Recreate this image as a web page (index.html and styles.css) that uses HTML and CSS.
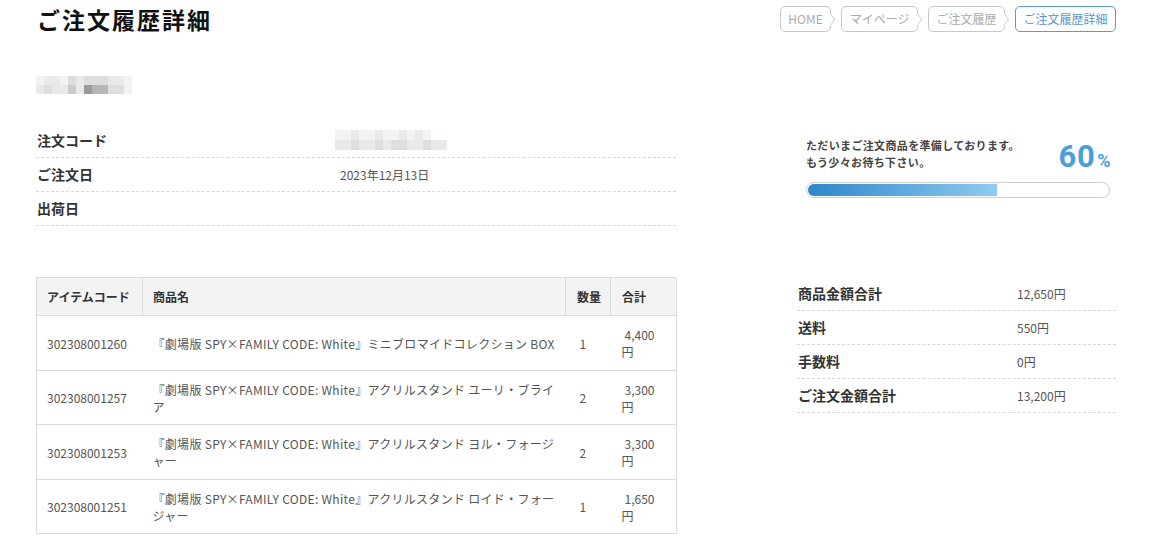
FILE: index.html
```html
<!DOCTYPE html>
<html lang="ja">
<head>
<meta charset="utf-8">
<title>ご注文履歴詳細</title>
<link rel="stylesheet" href="styles.css">
</head>
<body>
<div class="page">
  <header class="head">
    <h1 class="title">ご注文履歴詳細</h1>
    <nav class="crumbs">
      <a class="crumb">HOME</a>
      <a class="crumb">マイページ</a>
      <a class="crumb">ご注文履歴</a>
      <span class="crumb current">ご注文履歴詳細</span>
    </nav>
  </header>

  <div class="customer">
    <div class="mosaic">
      <span class="c1"></span><span class="c2"></span><span class="c2"></span><span class="c1"></span><span class="c3"></span><span class="c2"></span><span class="c3"></span><span class="c3"></span><span class="c3"></span><span class="c2"></span><span class="c2"></span><span class="c1"></span>
      <span class="c2"></span><span class="c3"></span><span class="c2"></span><span class="c2"></span><span class="c4"></span><span class="c2"></span><span class="c6"></span><span class="c5"></span><span class="c5"></span><span class="c3"></span><span class="c3"></span><span class="c1"></span>
    </div>
  </div>

  <section class="row row-top">
    <div class="info">
      <div class="info-row">
        <div class="info-label">注文コード</div>
        <div class="info-value">
          <div class="mosaic mosaic-code">
            <span class="c1"></span><span class="c1"></span><span class="c2"></span><span class="c1"></span><span class="c1"></span><span class="c2"></span><span class="c1"></span><span class="c1"></span><span class="c2"></span><span class="c1"></span><span class="c2"></span><span class="c1"></span><span class="c0"></span><span class="c0"></span>
            <span class="c2"></span><span class="c2"></span><span class="c3"></span><span class="c2"></span><span class="c2"></span><span class="c3"></span><span class="c2"></span><span class="c3"></span><span class="c3"></span><span class="c2"></span><span class="c2"></span><span class="c3"></span><span class="c2"></span><span class="c2"></span>
          </div>
        </div>
      </div>
      <div class="info-row">
        <div class="info-label">ご注文日</div>
        <div class="info-value">2023年12月13日</div>
      </div>
      <div class="info-row">
        <div class="info-label">出荷日</div>
        <div class="info-value"></div>
      </div>
    </div>

    <div class="status">
      <div class="status-head">
        <p class="status-text">ただいまご注文商品を準備しております。<br>もう少々お待ち下さい。</p>
        <div class="status-pct">60<span class="pct-sign">%</span></div>
      </div>
      <div class="bar"><div class="bar-fill" style="width: 63%"></div></div>
    </div>
  </section>

  <section class="row row-bottom">
    <table class="items">
      <colgroup>
        <col class="col-code"><col class="col-name"><col class="col-qty"><col class="col-sum">
      </colgroup>
      <thead>
        <tr><th>アイテムコード</th><th>商品名</th><th>数量</th><th>合計</th></tr>
      </thead>
      <tbody>
        <tr>
          <td>302308001260</td>
          <td class="name">『劇場版 SPY×FAMILY CODE: White』ミニブロマイドコレクション BOX</td>
          <td>1</td>
          <td class="sum"><span class="num">4,400</span><br>円</td>
        </tr>
        <tr>
          <td>302308001257</td>
          <td class="name">『劇場版 SPY×FAMILY CODE: White』アクリルスタンド ユーリ・ブライア</td>
          <td>2</td>
          <td class="sum"><span class="num">3,300</span><br>円</td>
        </tr>
        <tr>
          <td>302308001253</td>
          <td class="name">『劇場版 SPY×FAMILY CODE: White』アクリルスタンド ヨル・フォージャー</td>
          <td>2</td>
          <td class="sum"><span class="num">3,300</span><br>円</td>
        </tr>
        <tr>
          <td>302308001251</td>
          <td class="name">『劇場版 SPY×FAMILY CODE: White』アクリルスタンド ロイド・フォージャー</td>
          <td>1</td>
          <td class="sum"><span class="num">1,650</span><br>円</td>
        </tr>
      </tbody>
    </table>

    <div class="summary">
      <div class="sum-row"><div class="sum-label">商品金額合計</div><div class="sum-value">12,650円</div></div>
      <div class="sum-row"><div class="sum-label">送料</div><div class="sum-value">550円</div></div>
      <div class="sum-row"><div class="sum-label">手数料</div><div class="sum-value">0円</div></div>
      <div class="sum-row"><div class="sum-label">ご注文金額合計</div><div class="sum-value">13,200円</div></div>
    </div>
  </section>
</div>
</body>
</html>
```

FILE: styles.css
```css
* { box-sizing: border-box; }

html, body {
  margin: 0;
  padding: 0;
  background: #fff;
}

body {
  font-family: "Noto Sans CJK JP", "Noto Sans", sans-serif;
  color: #555;
  font-size: 12px;
}

.page {
  width: 1080px;
  margin-left: 36px;
  padding-top: 6px;
}

/* header */
.head {
  display: flex;
  justify-content: space-between;
  align-items: center;
  height: 26px;
}

.title {
  margin: 0;
  font-size: 23px;
  line-height: 26px;
  font-weight: 700;
  letter-spacing: 2px;
  color: #111;
  padding-left: 1px;
}

.crumbs {
  display: flex;
  gap: 10px;
}

.crumb {
  position: relative;
  display: block;
  height: 26px;
  line-height: 24px;
  padding: 0 7.5px;
  border: 1px solid #c8c8c8;
  border-radius: 5px;
  color: #aaa;
  font-size: 12px;
  background: #fff;
  white-space: nowrap;
}

.crumb::after {
  content: "";
  position: absolute;
  right: -5px;
  top: 8px;
  width: 8px;
  height: 8px;
  background: #fff;
  border-top: 1px solid #c8c8c8;
  border-right: 1px solid #c8c8c8;
  transform: scaleX(0.7) rotate(45deg);
}

.crumb.current {
  border-color: #5a9bd0;
  color: #5a94cc;
}

.crumb.current::after { display: none; }

/* mosaic (blurred personal data) */
.mosaic {
  display: grid;
  grid-template-columns: repeat(12, 8px);
  grid-auto-rows: 9px;
  width: max-content;
}

.mosaic-code {
  grid-template-columns: repeat(14, 8px);
  grid-auto-rows: 10px;
}

.c0 { background: #fdfdfd; }
.c1 { background: #f3f3f3; }
.c2 { background: #e9e9e9; }
.c3 { background: #dedede; }
.c4 { background: #cbcbcb; }
.c5 { background: #b6b6b6; }
.c6 { background: #9a9a9a; }

.customer {
  margin-top: 44px;
}

/* rows */
.row {
  display: flex;
  gap: 120px;
  align-items: flex-start;
}

.row-top { margin-top: 30px; }
.row-bottom { margin-top: 51px; }

/* info list */
.info {
  width: 640px;
}

.info-row {
  display: flex;
  align-items: center;
  height: 34px;
  border-bottom: 1px dashed #d8d8d8;
  line-height: 17px;
}

.info-label {
  width: 304px;
  padding-left: 1px;
  font-size: 14px;
  font-weight: 700;
  color: #333;
}

.info-value {
  font-size: 12px;
  color: #555;
}

.info-value .mosaic { margin-top: -2px; margin-left: -5px; }

/* status */
.status {
  width: 304px;
  margin-left: 10px;
  margin-top: 13px;
}

.status-head {
  display: flex;
  justify-content: space-between;
  align-items: flex-start;
}

.status-text {
  margin: 0;
  font-size: 11px;
  line-height: 17px;
  font-weight: 700;
  letter-spacing: 0.35px;
  color: #444;
}

.status-pct {
  font-family: Roboto, "Noto Sans", sans-serif;
  font-weight: 700;
  font-size: 31px;
  line-height: 34px;
  color: #4a9fd8;
  margin-top: 3px;
  margin-right: -1px;
  letter-spacing: 0.5px;
}

.pct-sign {
  font-size: 18px;
  margin-left: 2px;
}

.bar {
  margin-top: 4px;
  height: 16px;
  border: 1px solid #cfcfcf;
  border-radius: 8px;
  padding: 1px;
}

.bar-fill {
  height: 12px;
  border-radius: 6px 0 0 6px;
  background: linear-gradient(to right, #2e87c9, #8fcbf0);
}

/* items table */
.items {
  width: 640px;
  border-collapse: collapse;
  table-layout: fixed;
  border: 1px solid #dcdcdc;
  font-size: 12px;
  color: #555;
}

.col-code { width: 106px; }
.col-name { width: 423px; }
.col-qty { width: 45px; }
.col-sum { width: 66px; }

.items th {
  background: #f3f3f3;
  font-weight: 700;
  color: #333;
  text-align: left;
  padding: 10px 10px;
  line-height: 17px;
  border: 1px solid #dcdcdc;
}

.items th:nth-child(3),
.items th:nth-child(4) { padding-left: 11px; padding-right: 5px; }

.items td {
  padding: 10px 10px 9.5px;
  line-height: 17px;
  vertical-align: middle;
  border-top: 1px solid #dcdcdc;
}

.items td.name { letter-spacing: 0.3px; }

.items td:nth-child(3) { padding-left: 14px; }
.items td:nth-child(4) { padding-left: 11px; padding-right: 4px; }

.num { padding-left: 3px; }

/* summary */
.summary {
  width: 320px;
  margin-top: 0;
}

.sum-row {
  display: flex;
  align-items: center;
  height: 34px;
  line-height: 17px;
  border-bottom: 1px dashed #d8d8d8;
}

.sum-label {
  width: 220px;
  padding-left: 1px;
  font-size: 14px;
  font-weight: 700;
  color: #333;
}

.sum-value {
  font-size: 12px;
  color: #555;
}
```
